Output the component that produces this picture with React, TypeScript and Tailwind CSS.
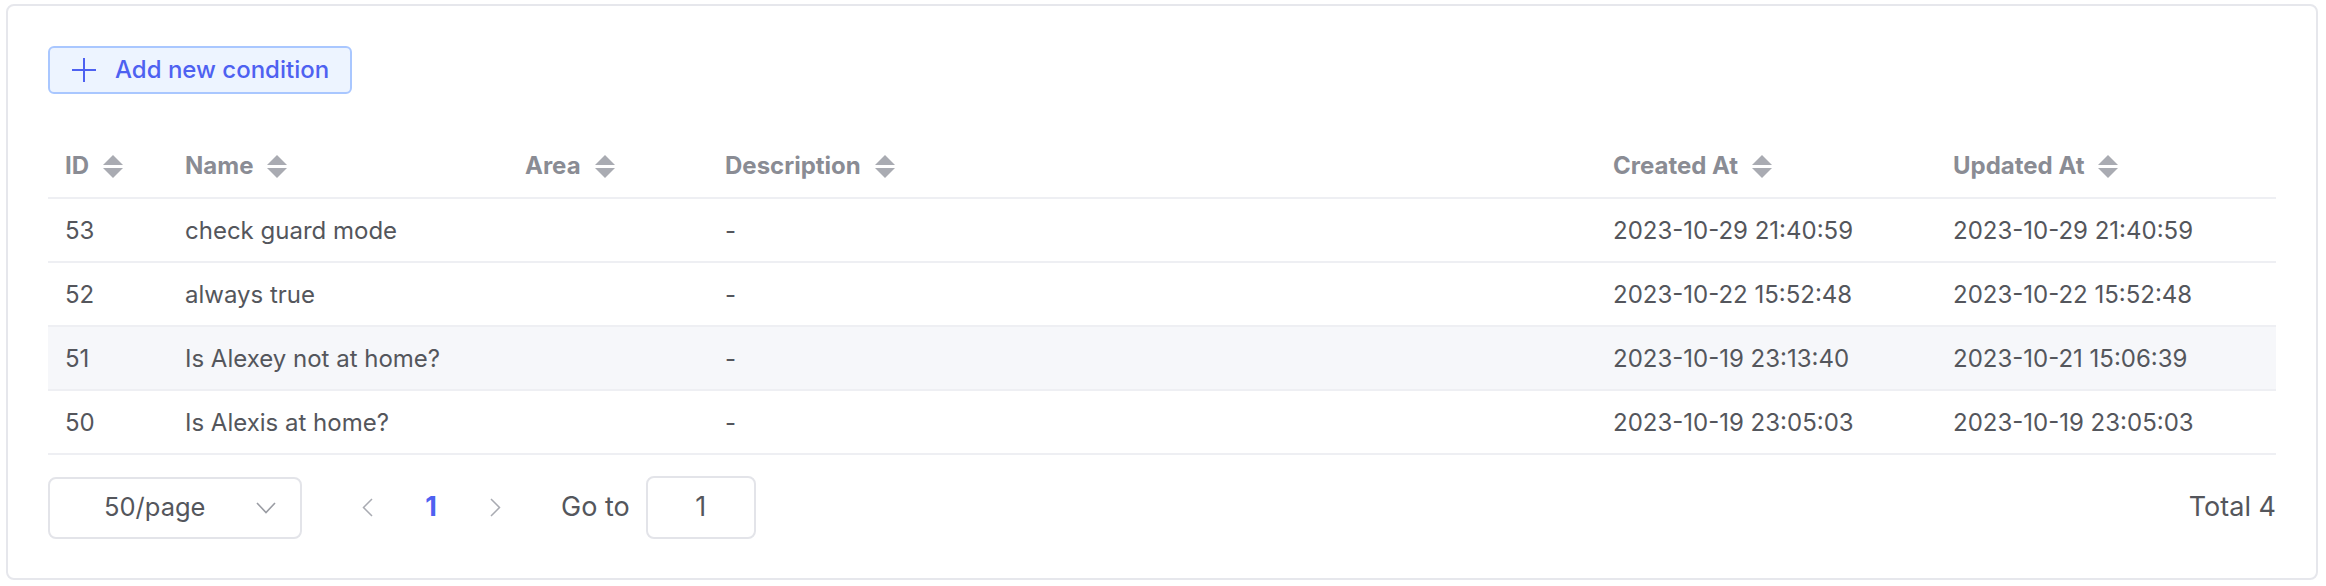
import React from "react";

type Row = {
  id: number;
  name: string;
  description: string;
  createdAt: string;
  updatedAt: string;
};

const rows: Row[] = [
  { id: 53, name: "check guard mode", description: "-", createdAt: "2023-10-29 21:40:59", updatedAt: "2023-10-29 21:40:59" },
  { id: 52, name: "always true", description: "-", createdAt: "2023-10-22 15:52:48", updatedAt: "2023-10-22 15:52:48" },
  { id: 51, name: "Is Alexey not at home?", description: "-", createdAt: "2023-10-19 23:13:40", updatedAt: "2023-10-21 15:06:39" },
  { id: 50, name: "Is Alexis at home?", description: "-", createdAt: "2023-10-19 23:05:03", updatedAt: "2023-10-19 23:05:03" },
];

const columns = ["ID", "Name", "Area", "Description", "Created At", "Updated At"];

const grid = "grid grid-cols-[120px_340px_200px_1fr_340px_340px]";

function SortIcon() {
  return (
    <svg width="20" height="23" viewBox="0 0 20 23" className="ml-[14px] shrink-0">
      <path d="M0 10 L10 0 L20 10 Z" fill="#a9abb2" />
      <path d="M0 13 L20 13 L10 23 Z" fill="#a9abb2" />
    </svg>
  );
}

export default function App() {
  return (
    <div
      className="bg-white w-[2326px] h-[586px] pt-[4px] pl-[6px]"
      style={{ fontFamily: "Inter, 'Noto Sans', sans-serif" }}
    >
      <div className="w-[2312px] h-[576px] border-2 border-[#e6e7ec] rounded-[8px] px-[40px] pt-[40px]">
        <button className="flex items-center h-[48px] w-[304px] pl-[21px] border-2 border-[#a9c7ff] bg-[#edf4ff] rounded-[6px] text-[#4e61f1] text-[24px] font-medium">
          <svg width="26" height="26" viewBox="0 0 26 26" className="shrink-0">
            <path d="M13 1 V25 M1 13 H25" stroke="#4e61f1" strokeWidth="2" />
          </svg>
          <span className="ml-[18px] leading-none">Add new condition</span>
        </button>

        <div className="mt-[41px]">
          <div className={`${grid} h-[64px] border-b-2 border-[#eeeff3]`}>
            {columns.map((c) => (
              <div key={c} className="flex items-center pl-[17px] text-[24px] font-bold text-[#8a8c94]">
                <span>{c}</span>
                <SortIcon />
              </div>
            ))}
          </div>
          {rows.map((r) => (
            <div
              key={r.id}
              className={`${grid} h-[64px] border-b-2 border-[#eeeff3] text-[24px] text-[#54565c] ${
                r.id === 51 ? "bg-[#f6f7fa]" : ""
              }`}
            >
              <div className="flex items-center pl-[17px] pt-[2px]">{r.id}</div>
              <div className="flex items-center pl-[17px] pt-[2px]">{r.name}</div>
              <div className="flex items-center pl-[17px] pt-[2px]"></div>
              <div className="flex items-center pl-[17px] pt-[2px]">{r.description}</div>
              <div className="flex items-center pl-[17px] pt-[2px]">{r.createdAt}</div>
              <div className="flex items-center pl-[17px] pt-[2px]">{r.updatedAt}</div>
            </div>
          ))}
        </div>

        <div className="flex items-center mt-[21px] text-[27px] text-[#54565c]">
          <div className="flex items-center h-[62px] w-[254px] border-2 border-[#e3e4e9] rounded-[8px] pl-[54px] pr-[24px]">
            <span className="flex-1 text-[25.5px]">50/page</span>
            <svg width="20" height="12" viewBox="0 0 20 12">
              <path d="M1 1 L10 10.5 L19 1" stroke="#9a9ca3" strokeWidth="1.6" fill="none" />
            </svg>
          </div>
          <div className="flex items-center ml-[39px] gap-[12px]">
            <div className="flex items-center justify-center w-[52px] h-[52px]">
              <svg width="11" height="19" viewBox="0 0 11 19">
                <path d="M10 1 L1.5 9.5 L10 18" stroke="#a9abb2" strokeWidth="1.5" fill="none" />
              </svg>
            </div>
            <div className="flex items-center justify-center w-[52px] h-[52px] font-bold text-[#4e61f1]">1</div>
            <div className="flex items-center justify-center w-[52px] h-[52px]">
              <svg width="11" height="19" viewBox="0 0 11 19">
                <path d="M1 1 L9.5 9.5 L1 18" stroke="#a9abb2" strokeWidth="1.5" fill="none" />
              </svg>
            </div>
          </div>
          <span className="ml-[40px]">Go to</span>
          <div className="ml-[16px] flex items-center justify-center h-[63px] w-[110px] border-2 border-[#e3e4e9] rounded-[8px]">
            1
          </div>
          <span className="ml-auto">Total 4</span>
        </div>
      </div>
    </div>
  );
}
